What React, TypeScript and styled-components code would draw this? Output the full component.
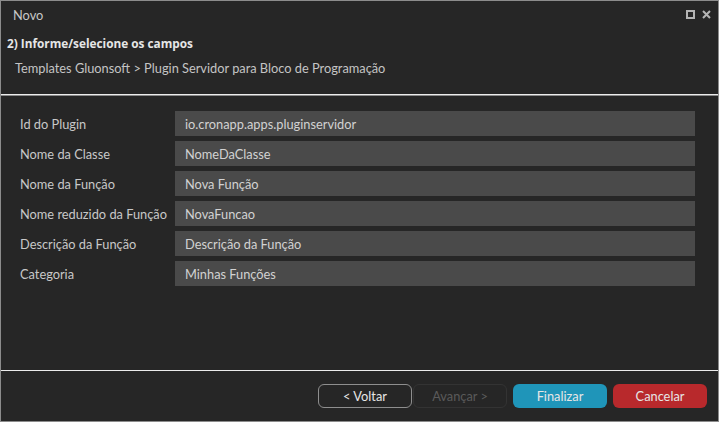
import React from "react";
import styled, { createGlobalStyle } from "styled-components";

const Global = createGlobalStyle`
  html, body { margin: 0; padding: 0; background: #262626; }
  * { box-sizing: border-box; }
`;

const FONT = `"Lato", "Open Sans", sans-serif`;

const Window = styled.div`
  width: 719px;
  height: 422px;
  background: #262626;
  border: 1px solid #8c8c8c;
  display: flex;
  flex-direction: column;
  font-family: ${FONT};
  color: #cfcfcf;
`;

const TitleBar = styled.div`
  height: 27px;
  display: flex;
  align-items: center;
  padding: 0 7px 0 12px;
  font-size: 12.8px;
  color: #c8c8c8;
`;

const TitleText = styled.span`
  flex: 1;
`;

const TitleIcons = styled.div`
  display: flex;
  gap: 7px;
  align-items: center;
`;

const Heading = styled.div`
  height: 30px;
  display: flex;
  align-items: center;
  padding-left: 6px;
  font-family: "Open Sans", sans-serif;
  font-weight: 700;
  font-size: 11.8px;
  color: #e6e6e6;
`;

const Breadcrumb = styled.div`
  height: 20px;
  display: flex;
  align-items: center;
  padding-left: 14px;
  font-size: 12.8px;
  color: #c4c4c4;
`;

const Divider = styled.div<{ $top?: number; $double?: boolean }>`
  margin-top: ${(p) => p.$top ?? 0}px;
  height: ${(p) => (p.$double ? 2 : 1)}px;
  border-top: 1px solid #ececec;
  border-bottom: ${(p) => (p.$double ? "1px solid #8a8a8a" : "none")};
  background: #ececec;
`;

const Form = styled.div`
  flex: 1;
  display: flex;
  flex-direction: column;
  gap: 5px;
  padding: 15px 23px 0 19px;
`;

const Row = styled.div`
  display: grid;
  grid-template-columns: 155px 1fr;
  align-items: center;
  height: 25px;
`;

const Label = styled.span`
  font-size: 12.8px;
  color: #c8c8c8;
  white-space: nowrap;
`;

const Input = styled.div`
  height: 25px;
  background: #4a4a4a;
  display: flex;
  align-items: center;
  padding-left: 10px;
  font-size: 12.8px;
  color: #d2d2d2;
`;

const Footer = styled.div`
  height: 50px;
  display: flex;
  align-items: flex-start;
  justify-content: flex-end;
  padding: 13px 11px 0 0;
`;

const Button = styled.button<{ $variant: "outline" | "disabled" | "primary" | "danger"; $ml?: number }>`
  width: 94px;
  height: 24px;
  margin-left: ${(p) => p.$ml ?? 0}px;
  border-radius: 6px;
  font-family: ${FONT};
  font-size: 12.8px;
  padding: 0;
  cursor: pointer;
  border: 1px solid
    ${(p) =>
      p.$variant === "outline" ? "#8e8e8e" : p.$variant === "disabled" ? "#333333" : "transparent"};
  background: ${(p) =>
    p.$variant === "primary" ? "#1f95b9" : p.$variant === "danger" ? "#b8292c" : "transparent"};
  color: ${(p) => (p.$variant === "disabled" ? "#5a5a5a" : "#e6e6e6")};
`;

const fields: [string, string][] = [
  ["Id do Plugin", "io.cronapp.apps.pluginservidor"],
  ["Nome da Classe", "NomeDaClasse"],
  ["Nome da Função", "Nova Função"],
  ["Nome reduzido da Função", "NovaFuncao"],
  ["Descrição da Função", "Descrição da Função"],
  ["Categoria", "Minhas Funções"],
];

export default function App() {
  return (
    <>
      <Global />
      <Window>
        <TitleBar>
          <TitleText>Novo</TitleText>
          <TitleIcons>
            <svg width="9" height="9" viewBox="0 0 9 9">
              <rect x="1" y="1" width="7" height="7" fill="none" stroke="#b4b4b4" strokeWidth="2" />
            </svg>
            <svg width="9" height="9" viewBox="0 0 9 9">
              <path d="M1 1L8 8M8 1L1 8" stroke="#b4b4b4" strokeWidth="2" />
            </svg>
          </TitleIcons>
        </TitleBar>
        <Heading>2) Informe/selecione os campos</Heading>
        <Breadcrumb>Templates Gluonsoft &gt; Plugin Servidor para Bloco de Programação</Breadcrumb>
        <Divider $top={16} $double />
        <Form>
          {fields.map(([l, v]) => (
            <Row key={l}>
              <Label>{l}</Label>
              <Input>{v}</Input>
            </Row>
          ))}
        </Form>
        <Divider />
        <Footer>
          <Button $variant="outline">&lt; Voltar</Button>
          <Button $variant="disabled" $ml={1}>Avançar &gt;</Button>
          <Button $variant="primary" $ml={6}>Finalizar</Button>
          <Button $variant="danger" $ml={6}>Cancelar</Button>
        </Footer>
      </Window>
    </>
  );
}
